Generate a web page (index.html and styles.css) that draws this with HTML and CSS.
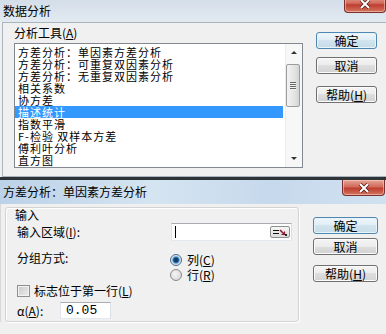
FILE: index.html
```html
<!DOCTYPE html>
<html lang="zh-CN">

<head>
    <meta charset="UTF-8">
    <title>数据分析</title>
    <link rel="stylesheet" href="styles.css">
</head>

<body>
    <div class="window first">
        <div class="titlebar">
            <span class="title">数据分析</span>
            <span class="close">
                <svg width="12" height="10" viewBox="0 0 12 10"><path d="M2 1L10 9M10 1L2 9" stroke="#5a1c1c" stroke-width="3.6"/><path d="M2 1L10 9M10 1L2 9" stroke="#fff" stroke-width="2"/></svg>
            </span>
        </div>
        <div class="client">
            <div class="tools">
                <div class="caption">分析工具(<u>A</u>)</div>
                <div class="listbox">
                    <ul class="items">
                        <li>方差分析：单因素方差分析</li>
                        <li>方差分析：可重复双因素分析</li>
                        <li>方差分析：无重复双因素分析</li>
                        <li>相关系数</li>
                        <li>协方差</li>
                        <li class="selected">描述统计</li>
                        <li>指数平滑</li>
                        <li>F-检验 双样本方差</li>
                        <li>傅利叶分析</li>
                        <li>直方图</li>
                    </ul>
                    <div class="vscroll">
                        <span class="arrow-btn"><span class="arrow up"></span></span>
                        <span class="thumb"><span class="grip"></span></span>
                        <span class="track"></span>
                        <span class="arrow-btn"><span class="arrow down"></span></span>
                    </div>
                </div>
            </div>
            <div class="buttons">
                <button class="btn default">确定</button>
                <button class="btn cancel">取消</button>
                <button class="btn help">帮助(<u>H</u>)</button>
            </div>
        </div>
    </div>

    <div class="window second">
        <div class="titlebar">
            <span class="title">方差分析：单因素方差分析</span>
            <span class="close">
                <svg width="12" height="10" viewBox="0 0 12 10"><path d="M2 1L10 9M10 1L2 9" stroke="#5a1c1c" stroke-width="3.6"/><path d="M2 1L10 9M10 1L2 9" stroke="#fff" stroke-width="2"/></svg>
            </span>
        </div>
        <div class="client">
            <div class="group">
                <div class="group-label">输入</div>
                <div class="row range-row">
                    <span class="field-label">输入区域(<u>I</u>):</span>
                    <div class="textbox range">
                        <span class="caret"></span>
                        <span class="picker">
                            <svg width="16" height="9" viewBox="0 0 16 9"><path d="M1 2.5H7M1 5.5H7" stroke="#111" stroke-width="1.2"/><path d="M8 2L12 6" stroke="#8b1a2a" stroke-width="1.6"/><path d="M9.5 6.5H12.5V3.5" fill="none" stroke="#8b1a2a" stroke-width="1.2"/><rect x="13" y="6" width="2" height="2" fill="#222"/></svg>
                        </span>
                    </div>
                </div>
                <div class="row group-row">
                    <span class="field-label">分组方式:</span>
                    <div class="radios">
                        <label class="option"><span class="radio checked"></span><span>列(<u>C</u>)</span></label>
                        <label class="option"><span class="radio"></span><span>行(<u>R</u>)</span></label>
                    </div>
                </div>
                <label class="row check-row"><span class="checkbox"></span><span>标志位于第一行(<u>L</u>)</span></label>
                <div class="row alpha-row">
                    <span class="alpha-label">α(<u>A</u>):</span>
                    <div class="textbox alpha">0.05</div>
                </div>
            </div>
            <div class="buttons">
                <button class="btn default">确定</button>
                <button class="btn cancel">取消</button>
                <button class="btn help">帮助(<u>H</u>)</button>
            </div>
        </div>
    </div>
</body>

</html>
```

FILE: styles.css
```css
* {
    box-sizing: border-box;
}

body {
    margin: 0;
    width: 386px;
    height: 334px;
    overflow: hidden;
    background: #f0f0f0;
    font-family: "Noto Sans CJK SC", "DejaVu Sans", sans-serif;
    font-size: 12px;
    color: #000;
}

.window {
    display: flex;
    flex-direction: column;
}

.titlebar {
    display: flex;
    justify-content: space-between;
    align-items: center;
    padding-left: 3px;
    line-height: 14px;
}

.close {
    align-self: flex-start;
    display: flex;
    align-items: center;
    justify-content: center;
    height: 16px;
    border: 1px solid #7a3030;
    border-top: none;
    border-radius: 0 0 4px 4px;
    background: linear-gradient(#e7a493, #d06c5c 45%, #bf3d2f 55%, #d2765f);
    box-shadow: inset 0 0 0 1px rgba(255, 220, 210, 0.5);
}

/* data analysis dialog */

.first {
    height: 177px;
}

.first .titlebar {
    height: 22px;
    background: linear-gradient(#d4dee9, #e2e9f1);
}

.first .close {
    width: 42px;
    height: 17px;
    margin-top: -4px;
}

.first .client {
    flex: 1;
    display: flex;
    margin-left: 2px;
    border: 1px solid #aab4be;
    border-right: none;
    background: #f0f0f0;
}

.tools {
    padding: 3px 0 0 11px;
}

.caption {
    line-height: 14px;
}

.listbox {
    display: flex;
    width: 289px;
    height: 125px;
    margin-top: 3px;
    border: 1px solid #828790;
    background: #fff;
}

.items {
    flex: 1;
    margin: 0;
    padding: 2px 0 0 0;
    list-style: none;
}

.items li {
    height: 12px;
    margin-right: 2px;
    padding-left: 3px;
    font-size: 11px;
    letter-spacing: 1px;
    line-height: 12px;
    white-space: nowrap;
}

.items li.selected {
    background: #3399ff;
    color: #fff;
}

.vscroll {
    display: flex;
    flex-direction: column;
    width: 17px;
    background: #f7f7f7;
    border-left: 1px solid #ececec;
}

.arrow-btn {
    display: flex;
    align-items: center;
    justify-content: center;
    height: 17px;
}

.arrow {
    width: 0;
    height: 0;
    border-left: 3px solid transparent;
    border-right: 3px solid transparent;
}

.arrow.up {
    border-bottom: 3px solid #333;
}

.arrow.down {
    border-top: 3px solid #333;
}

.thumb {
    display: flex;
    align-items: center;
    justify-content: center;
    height: 43px;
    margin: 3px 2px 0 0;
    border: 1px solid #9c9c9c;
    border-radius: 2px;
    background: linear-gradient(90deg, #f3f3f3, #e4e4e4 60%, #d4d4d4);
}

.grip {
    width: 6px;
    height: 8px;
    background: repeating-linear-gradient(#666 0 1px, #f4f4f4 1px 2px);
}

.track {
    flex: 1;
}

.buttons {
    display: flex;
    flex-direction: column;
}

.first .buttons {
    width: 61px;
    margin-left: 13px;
    padding-top: 9px;
}

.btn {
    width: 100%;
    height: 17px;
    padding: 0;
    border: 1px solid #707070;
    border-radius: 3px;
    font: inherit;
    line-height: 14px;
    color: #000;
    background: linear-gradient(#f4f4f4, #ececec 50%, #dedede 50%, #d2d2d2);
    box-shadow: inset 0 0 0 1px #fbfbfb;
}

.btn.default {
    border-color: #4f87b0;
    background: linear-gradient(#eef6fb, #e0edf5 50%, #d1e4ef 50%, #c7dce8);
    box-shadow: inset 0 0 0 1px #e6f4fb;
}

.first .cancel {
    margin-top: 8px;
}

.first .help {
    margin-top: 12px;
}

/* one-way ANOVA dialog */

.second {
    flex: 1;
    border-top: 3px solid #2e3338;
}

.second .titlebar {
    height: 24px;
    background: linear-gradient(90deg, #bcd2e8, #d5e4f1 40%, #c6d9ec 70%, #d0e1f0);
}

.second .close {
    width: 43px;
    margin-right: 1px;
}

.second .client {
    flex: 1;
    display: flex;
    padding: 3px 0 0 4px;
    border-left: 1px solid #d8d8d8;
}

.group {
    width: 294px;
    height: 115px;
    padding: 1px 0 0 11px;
    border: 1px solid #d3d3d3;
    border-radius: 3px;
    box-shadow: inset 1px 1px #fff, 1px 1px #fff;
}

.group-label {
    line-height: 12px;
    margin-left: -2px;
}

.row {
    display: flex;
    align-items: center;
}

.field-label {
    width: 154px;
    line-height: 12px;
}

.range-row {
    margin-top: 2px;
}

.textbox {
    border: 1px solid #abadb3;
    border-color: #abadb3 #dbdfe6 #e3e9ef #e2e3ea;
    background: #fff;
}

.range {
    display: flex;
    align-items: center;
    justify-content: space-between;
    width: 121px;
    height: 18px;
    padding: 0 1px 0 3px;
}

.caret {
    width: 1px;
    height: 12px;
    background: #000;
}

.picker {
    display: flex;
    align-items: center;
    justify-content: center;
    width: 20px;
    height: 12px;
    border: 1px solid #8f8f8f;
    border-radius: 2px;
    background: linear-gradient(#f7f7f7, #dadada);
}

.group-row {
    align-items: flex-start;
    margin-top: 11px;
}

.radios {
    display: flex;
    flex-direction: column;
    margin-left: -1px;
}

.option {
    display: flex;
    align-items: center;
    gap: 5px;
    height: 15px;
    line-height: 12px;
}

.radio {
    width: 12px;
    height: 12px;
    border: 1px solid #8b8b8b;
    border-radius: 50%;
    background: radial-gradient(circle at 40% 40%, #f6f6f6, #d0d0d0);
}

.radio.checked {
    border-color: #4a6a87;
    background: radial-gradient(circle, #123f68 0 2px, #3a86c8 3px, #b9d5ea 4px, #eeeeee 5px);
}

.check-row {
    gap: 4px;
    height: 14px;
    margin-top: 2px;
    line-height: 12px;
}

.checkbox {
    width: 13px;
    height: 12px;
    border: 1px solid #8e8f8f;
    background: linear-gradient(135deg, #c9c9c9, #eeeeee);
    box-shadow: inset 0 0 0 1px #f2f2f2;
}

.alpha-row {
    margin-top: 4px;
}

.alpha-label {
    width: 43px;
    line-height: 12px;
}

.alpha {
    width: 51px;
    height: 17px;
    padding-left: 5px;
    font-family: "Liberation Mono", monospace;
    font-size: 13px;
    line-height: 15px;
}

.second .buttons {
    width: 65px;
    margin-left: 14px;
    padding-top: 10px;
}

.second .cancel {
    margin-top: 4px;
}

.second .help {
    margin-top: 10px;
}
```
